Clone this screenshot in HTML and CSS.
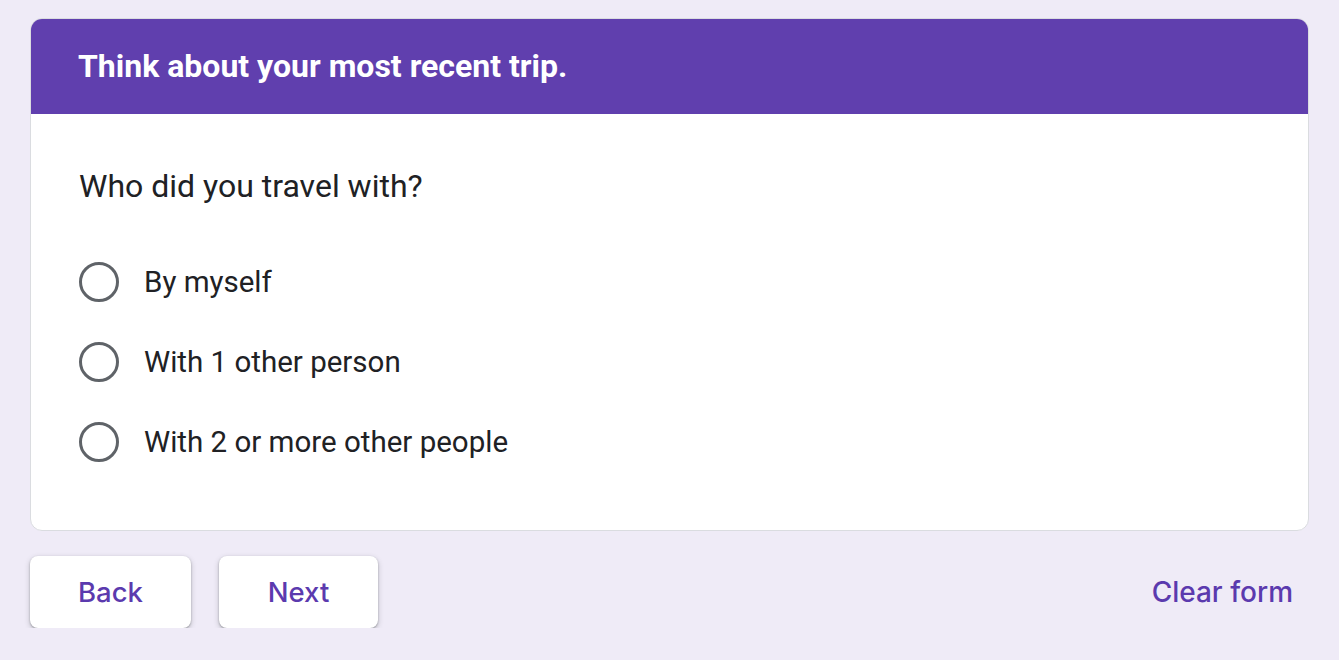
FILE: index.html
```html
<!DOCTYPE html>
<html>
<head>
<meta charset="utf-8">
<link rel="stylesheet" href="styles.css">
</head>
<body>
<div class="page">
  <div class="card">
    <div class="card-header">Think about your most recent trip.</div>
    <div class="card-body">
      <div class="question">Who did you travel with?</div>
      <div class="options">
        <label class="option"><span class="radio"></span><span class="opt-text">By myself</span></label>
        <label class="option"><span class="radio"></span><span class="opt-text">With 1 other person</span></label>
        <label class="option"><span class="radio"></span><span class="opt-text">With 2 or more other people</span></label>
      </div>
    </div>
  </div>
  <div class="actions">
    <div class="btns">
      <button class="btn btn-back">Back</button>
      <button class="btn btn-next">Next</button>
    </div>
    <a class="clear">Clear form</a>
  </div>
</div>
</body>
</html>
```
FILE: styles.css
```css
html, body {
  margin: 0;
  padding: 0;
  background: #efebf7;
  font-family: Roboto, "Liberation Sans", Arial, sans-serif;
}
.page {
  padding: 18px 30px 0 30px;
  width: 1279px;
}
.card {
  background: #fff;
  border: 1px solid #dadce0;
  border-radius: 12px;
  overflow: hidden;
}
.card-header {
  background: #603fae;
  color: #fff;
  font-weight: 700;
  font-size: 32px;
  height: 96px;
  box-sizing: border-box;
  padding: 0 0 0 48px;
  display: flex;
  align-items: center;
  margin: -1px -1px 0 -1px;
}
.card-body {
  padding: 52px 48px 48px 48px;
}
.question {
  font-size: 32px;
  color: #202124;
  line-height: 40px;
  margin-bottom: 36px;
}
.options {
  display: flex;
  flex-direction: column;
}
.option {
  display: flex;
  align-items: center;
  height: 80px;
}
.radio {
  width: 34px;
  height: 34px;
  border: 3px solid #5f6368;
  border-radius: 50%;
  flex: none;
  margin-right: 25px;
}
.opt-text {
  font-size: 29.5px;
  color: #202124;
}
.actions {
  display: flex;
  justify-content: space-between;
  align-items: center;
  margin-top: 25px;
}
.btns {
  display: flex;
  gap: 28px;
}
.btn {
  height: 72px;
  border: none;
  background: #fff;
  border-radius: 8px;
  box-shadow: 0 1px 2px rgba(60,64,67,0.4), 0 2px 5px 1px rgba(60,64,67,0.18);
  color: #5b3aae;
  font-family: Inter, "Open Sans", sans-serif;
  font-weight: 500;
  font-size: 27.5px;
  padding: 0;
}
.btn-back { width: 161px; }
.btn-next { width: 159px; }
.clear {
  color: #5b3aae;
  font-family: Inter, "Open Sans", sans-serif;
  font-weight: 500;
  font-size: 28px;
  margin-right: 16px;
}
```
